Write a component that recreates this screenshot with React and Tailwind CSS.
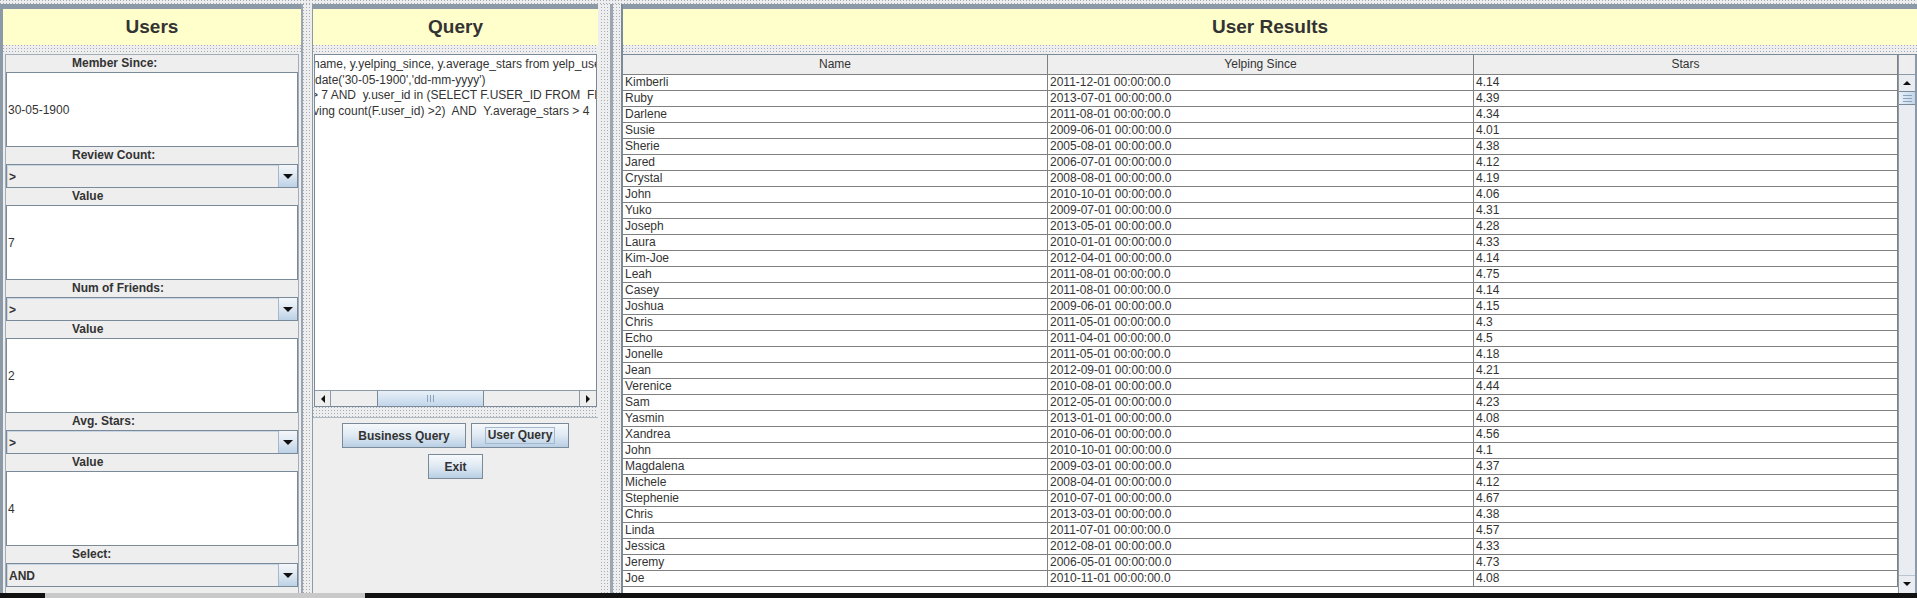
import React from 'react';

const DOTS =
  'bg-[#eeeeee] bg-[conic-gradient(from_270deg_at_1px_1px,#a3acb6_90deg,transparent_0)] bg-[length:3px_3px]';

const FILTROS = [
  { label: 'Member Since:', tipo: 'field', valor: '30-05-1900' },
  { label: 'Review Count:', tipo: 'combo', valor: '>' },
  { label: 'Value', tipo: 'field', valor: '7' },
  { label: 'Num of Friends:', tipo: 'combo', valor: '>' },
  { label: 'Value', tipo: 'field', valor: '2' },
  { label: 'Avg. Stars:', tipo: 'combo', valor: '>' },
  { label: 'Value', tipo: 'field', valor: '4' },
  { label: 'Select:', tipo: 'combo', valor: 'AND' },
];

const RESULTADOS = [
  ['Kimberli', '2011-12-01', '4.14'],
  ['Ruby', '2013-07-01', '4.39'],
  ['Darlene', '2011-08-01', '4.34'],
  ['Susie', '2009-06-01', '4.01'],
  ['Sherie', '2005-08-01', '4.38'],
  ['Jared', '2006-07-01', '4.12'],
  ['Crystal', '2008-08-01', '4.19'],
  ['John', '2010-10-01', '4.06'],
  ['Yuko', '2009-07-01', '4.31'],
  ['Joseph', '2013-05-01', '4.28'],
  ['Laura', '2010-01-01', '4.33'],
  ['Kim-Joe', '2012-04-01', '4.14'],
  ['Leah', '2011-08-01', '4.75'],
  ['Casey', '2011-08-01', '4.14'],
  ['Joshua', '2009-06-01', '4.15'],
  ['Chris', '2011-05-01', '4.3'],
  ['Echo', '2011-04-01', '4.5'],
  ['Jonelle', '2011-05-01', '4.18'],
  ['Jean', '2012-09-01', '4.21'],
  ['Verenice', '2010-08-01', '4.44'],
  ['Sam', '2012-05-01', '4.23'],
  ['Yasmin', '2013-01-01', '4.08'],
  ['Xandrea', '2010-06-01', '4.56'],
  ['John', '2010-10-01', '4.1'],
  ['Magdalena', '2009-03-01', '4.37'],
  ['Michele', '2008-04-01', '4.12'],
  ['Stephenie', '2010-07-01', '4.67'],
  ['Chris', '2013-03-01', '4.38'],
  ['Linda', '2011-07-01', '4.57'],
  ['Jessica', '2012-08-01', '4.33'],
  ['Jeremy', '2006-05-01', '4.73'],
  ['Joe', '2010-11-01', '4.08'],
];

function Header({ children }) {
  return (
    <div className="h-[36px] shrink-0 bg-[#ffffcc] flex items-center justify-center text-[19px] font-bold text-[#333333]">
      {children}
    </div>
  );
}

function Combo({ valor }) {
  return (
    <div className="h-[24px] flex border border-[#7a8a99] bg-[#eeeeee]">
      <div className="flex-1 flex items-center pl-[1px] text-[12px] font-bold border-t border-l border-[#c8d6e4]">
        {valor}
      </div>
      <div className="w-[19px] flex items-center justify-center border-l border-[#a3b8cc] bg-linear-to-b from-[#f4f7fa] via-[#dde7f1] to-[#bcd1e6]">
        <div className="w-0 h-0 border-x-[5px] border-x-transparent border-t-[5px] border-t-[#111]" />
      </div>
    </div>
  );
}

function Boton({ ancho, foco, children }) {
  return (
    <div
      className={`${ancho} h-[25px] flex items-center justify-center border border-[#7a8a99] bg-linear-to-b from-[#f6f9fc] via-[#dfe9f3] to-[#b9cfe5] text-[12px] font-bold text-[#333333]`}
    >
      {foco ? (
        <span className="px-[2px] leading-[15px] border border-[#a3b8cc]">{children}</span>
      ) : (
        children
      )}
    </div>
  );
}

export default function App() {
  return (
    <div className="w-[1917px] h-[598px] overflow-hidden flex flex-col bg-[#eeeeee] font-['Liberation_Sans',Arial,sans-serif] text-[#333333]">
      <div className={`h-[4px] shrink-0 ${DOTS}`} />

      <div className="flex-1 min-h-0 flex">
        <div className="w-[3px] bg-[#8c99a6]" />

        {/* USERS */}
        <div className="w-[298px] flex flex-col border-t-[5px] border-[#8c99a6]">
          <Header>Users</Header>
          <div className={`h-[9px] shrink-0 ${DOTS}`} />
          <div className="flex-1 mx-[2px] border-x border-t border-[#a3adb8] flex flex-col">
            {FILTROS.map((f, i) => (
              <React.Fragment key={i}>
                <div className="h-[17px] shrink-0 pl-[66px] text-[12px] font-bold leading-[17px]">{f.label}</div>
                {f.tipo === 'field' ? (
                  <div className="h-[75px] shrink-0 flex items-center pl-[1px] bg-white border border-[#7a8a99] text-[12px]">
                    {f.valor}
                  </div>
                ) : (
                  <Combo valor={f.valor} />
                )}
              </React.Fragment>
            ))}
          </div>
        </div>

        {/* divisor */}
        <div className="w-[12px] flex">
          <div className="w-[2px] bg-[#9aa5b1]" />
          <div className={`flex-1 ${DOTS}`} />
          <div className="w-[1px] bg-[#8c99a6]" />
        </div>

        {/* QUERY */}
        <div className="w-[285px] flex flex-col border-t-[5px] border-[#8c99a6]">
          <Header>Query</Header>
          <div className={`h-[9px] shrink-0 ${DOTS}`} />
          <div className="h-[353px] shrink-0 mx-[1px] border border-[#7a8a99] flex flex-col">
            <div className="flex-1 bg-white overflow-hidden pt-[2px] text-[12px] leading-[15.7px] whitespace-pre">
              <div className="-ml-[2px]">name, y.yelping_since, y.average_stars from yelp_user y</div>
              <div>date('30-05-1900','dd-mm-yyyy')</div>
              <div className="-ml-[4px]">&gt; 7 AND  y.user_id in (SELECT F.USER_ID FROM  FRIENDS F</div>
              <div className="-ml-[2px]">ving count(F.user_id) &gt;2)  AND  Y.average_stars &gt; 4</div>
            </div>
            <div className="h-[16px] shrink-0 flex border-t border-[#8c99a6] bg-[#eeeeee]">
              <div className="w-[16px] flex items-center justify-center border-r border-[#8c99a6]">
                <div className="w-0 h-0 border-y-[4px] border-y-transparent border-r-[4px] border-r-[#111]" />
              </div>
              <div className="flex-1 flex">
                <div className="ml-[46px] w-[107px] flex items-center justify-center gap-[2px] border-x border-[#7a8a99] bg-linear-to-b from-[#e8f0f8] to-[#c2d6ea]">
                  <div className="w-[1px] h-[7px] bg-[#8aa2bc]" />
                  <div className="w-[1px] h-[7px] bg-[#8aa2bc]" />
                  <div className="w-[1px] h-[7px] bg-[#8aa2bc]" />
                </div>
              </div>
              <div className="w-[17px] flex items-center justify-center border-l border-[#8c99a6]">
                <div className="w-0 h-0 border-y-[4px] border-y-transparent border-l-[4px] border-l-[#111]" />
              </div>
            </div>
          </div>
          <div className={`h-[10px] shrink-0 ${DOTS}`} />
          <div className="flex-1 border-t border-[#b0b8c0] flex flex-col items-center pt-[5px] gap-[6px]">
            <div className="flex gap-[5px]">
              <Boton ancho="w-[124px]">Business Query</Boton>
              <Boton ancho="w-[98px]" foco>User Query</Boton>
            </div>
            <Boton ancho="w-[55px]">Exit</Boton>
          </div>
        </div>

        {/* divisor doble */}
        <div className="w-[25px] flex">
          <div className="w-[3px] bg-[#eeeeee]" />
          <div className={`w-[9px] ${DOTS}`} />
          <div className="w-[3px] bg-[#9aa5b1]" />
          <div className={`w-[8px] ${DOTS}`} />
          <div className="w-[2px] bg-[#7a8a99]" />
        </div>

        {/* RESULTS */}
        <div className="flex-1 flex flex-col border-t-[5px] border-[#8c99a6]">
          <Header>User Results</Header>
          <div className={`h-[9px] shrink-0 ${DOTS}`} />
          <div className="flex-1 min-h-0 flex border-t border-[#7a8a99]">
            <div className="w-[1275px] overflow-hidden bg-white">
              <div className="grid grid-cols-[425px_426px_424px] h-[20px] bg-[#eeeeee] text-[12px] leading-[19px] text-center">
                <div className="border-r border-b border-[#808080]">Name</div>
                <div className="border-r border-b border-[#808080]">Yelping Since</div>
                <div className="border-r border-b border-[#808080]">Stars</div>
              </div>
              {RESULTADOS.map(([nombre, fecha, estrellas], i) => (
                <div key={i} className="grid grid-cols-[425px_426px_424px] h-[16px] text-[12px] leading-[15px]">
                  <div className="pl-[2px] border-r border-b border-[#808080]">{nombre}</div>
                  <div className="pl-[2px] border-r border-b border-[#808080]">{fecha} 00:00:00.0</div>
                  <div className="pl-[2px] border-r border-b border-[#808080]">{estrellas}</div>
                </div>
              ))}
            </div>
            <div className="w-[17px] flex flex-col border-l border-[#8c99a6]">
              <div className="h-[20px] shrink-0 bg-[#eeeeee] border-b border-[#8c99a6]" />
              <div className="flex-1 flex flex-col bg-[#e9edf1] pb-[2px]">
                <div className="h-[16px] flex items-center justify-center">
                  <div className="w-0 h-0 border-x-[4px] border-x-transparent border-b-[4px] border-b-[#111]" />
                </div>
                <div className="h-[14px] flex flex-col items-center justify-center gap-[2px] border-y border-[#7a8a99] bg-linear-to-r from-[#e8f0f8] to-[#c2d6ea]">
                  <div className="w-[9px] h-[1px] bg-[#8aa2bc]" />
                  <div className="w-[9px] h-[1px] bg-[#8aa2bc]" />
                  <div className="w-[9px] h-[1px] bg-[#8aa2bc]" />
                </div>
                <div className="flex-1" />
                <div className="h-[16px] flex items-center justify-center border-t border-[#b8c4d0]">
                  <div className="w-0 h-0 border-x-[4px] border-x-transparent border-t-[4px] border-t-[#111]" />
                </div>
              </div>
            </div>
            <div className="w-[2px] bg-[#8c99a6]" />
          </div>
        </div>
      </div>

      <div className="h-[5px] shrink-0 flex bg-[#111111]">
        <div className="ml-[45px] w-[320px] bg-[#c9c9c9]" />
      </div>
    </div>
  );
}
